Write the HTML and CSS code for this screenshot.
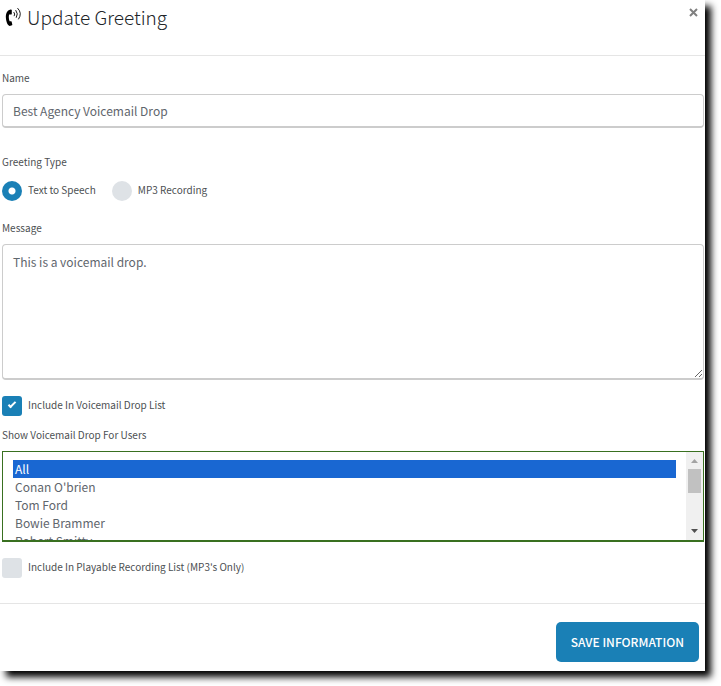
FILE: index.html
```html
<!DOCTYPE html>
<html lang="en">
<head>
<meta charset="utf-8">
<title>Update Greeting</title>
<link rel="stylesheet" href="styles.css">
</head>
<body>
<form class="modal">
  <header class="modal-header">
    <h1 class="title">
      <svg class="title-icon" viewBox="0 0 18 20" aria-hidden="true">
        <path d="M5.6 2.6 C1.8 3.2 0.6 7.2 0.9 11 C1.2 15 2.6 18.3 4.6 18.9 L7 18.3 Q7.4 18.1 7.3 17.6 L6.6 14.6 Q6.4 14.1 5.8 14.2 L4.6 14.3 C3.7 12 3.6 9.6 4.1 7.6 L6.3 7.4 Q6.8 7.3 6.8 6.8 L6.8 3.1 Q6.7 2.5 5.6 2.6 Z" fill="currentColor"/>
        <g fill="none" stroke="currentColor" stroke-linecap="round" stroke-width="0.9">
          <path d="M9 5.4 Q10.4 7 9.3 8.8"/>
          <path d="M10.9 3.4 Q13.6 6.8 11.4 10.4"/>
          <path d="M12.8 1.4 Q17.6 6.2 13.6 12"/>
        </g>
      </svg>
      Update Greeting
    </h1>
    <button class="close" type="button" aria-label="Close">
      <svg viewBox="0 0 9 9" aria-hidden="true"><path d="M1 1 L8 8 M8 1 L1 8" stroke="currentColor" stroke-width="2"/></svg>
    </button>
  </header>
  <div class="modal-body">
    <div class="field">
      <label class="label" for="name">Name</label>
      <input class="control" id="name" type="text" value="Best Agency Voicemail Drop">
    </div>
    <fieldset class="choices">
      <legend class="label">Greeting Type</legend>
      <div class="choice-row">
        <label class="choice"><input class="tick radio" type="radio" name="type" checked>Text to Speech</label>
        <label class="choice"><input class="tick radio" type="radio" name="type">MP3 Recording</label>
      </div>
    </fieldset>
    <div class="field">
      <label class="label" for="message">Message</label>
      <textarea class="control message" id="message">This is a voicemail drop.</textarea>
    </div>
    <label class="choice"><input class="tick checkbox" type="checkbox" checked>Include In Voicemail Drop List</label>
    <div class="field users-field">
      <label class="label" for="users">Show Voicemail Drop For Users</label>
      <div class="users-box">
        <select class="users" id="users" multiple>
          <option selected>All</option>
          <option>Conan O'brien</option>
          <option>Tom Ford</option>
          <option>Bowie Brammer</option>
          <option>Robert Smitty</option>
        </select>
        <div class="scrollbar" aria-hidden="true">
          <svg class="arrow arrow-up" viewBox="0 0 7 4"><path d="M0 4 L3.5 0 L7 4 Z" fill="currentColor"/></svg>
          <div class="thumb"></div>
          <svg class="arrow" viewBox="0 0 7 4"><path d="M0 0 L7 0 L3.5 4 Z" fill="currentColor"/></svg>
        </div>
      </div>
    </div>
    <label class="choice"><input class="tick checkbox" type="checkbox">Include In Playable Recording List (MP3's Only)</label>
  </div>
  <footer class="modal-footer">
    <button class="save" type="submit">SAVE INFORMATION</button>
  </footer>
</form>
</body>
</html>
```
FILE: styles.css
```css
* { box-sizing: border-box; }

body {
  margin: 0;
  padding: 0 16px 15px 0;
  background: #fff;
  color: #4c4f52;
  font-family: "Noto Sans CJK SC", "Noto Sans", sans-serif;
  font-size: 10px;
  line-height: 16px;
}

.modal {
  background: #fff;
  box-shadow: 6px 6px 7px #000;
}

.modal-header {
  display: flex;
  justify-content: space-between;
  align-items: flex-start;
  padding: 4px 7px 25px 5px;
  border-bottom: 1px solid #e5e5e5;
}

.title {
  display: flex;
  align-items: center;
  gap: 4px;
  margin: 0;
  color: #212529;
  font-size: 19px;
  font-weight: 300;
  line-height: 26px;
}

.title-icon { width: 18px; height: 20px; color: #000; }

.close {
  display: flex;
  padding: 4px 0;
  border: 0;
  background: none;
  color: #808080;
}

.close svg { width: 9px; height: 9px; }

.modal-body { padding: 14px 1px 25px 2px; }

.field { display: flex; flex-direction: column; }

.label { display: block; padding: 0; margin-bottom: 8px; }

.control {
  width: 100%;
  height: 34px;
  padding: 6px 10px;
  border: 1px solid #ccc;
  border-bottom-width: 2px;
  border-radius: 4px;
  background: #fff;
  color: #5f666d;
  font: inherit;
  font-size: 12px;
  line-height: 20px;
}

.message { height: 136px; padding-top: 7px; margin-bottom: 16px; resize: vertical; }

.choices { margin: 26px 0 19px; padding: 0; border: 0; }

.choices .label { margin-bottom: 11px; }

.choice-row { display: flex; gap: 16px; }

.choice { display: flex; align-items: flex-start; gap: 6px; line-height: 18px; }

.tick {
  appearance: none;
  flex: none;
  width: 20px;
  height: 20px;
  margin: 0;
  background: #dee2e6 center / 100% no-repeat;
}

.tick:checked { background-color: #1a80b6; }

.radio { border-radius: 50%; }

.radio:checked { background-image: radial-gradient(circle, #fff 3px, transparent 4px); }

.checkbox { position: relative; border-radius: 3px; }

.checkbox:checked::after {
  content: "";
  position: absolute;
  left: 6px;
  top: 6px;
  width: 6px;
  height: 2px;
  border: solid #fff;
  border-width: 0 0 2px 2px;
  transform: rotate(-45deg);
}

.users-field { margin: 11px 0 16px; }

.users-box {
  display: flex;
  height: 91px;
  border: 1px solid #397020;
  border-bottom-width: 2px;
}

.users {
  flex: 1;
  min-width: 0;
  height: 100%;
  padding: 8px 10px;
  border: 0;
  border-radius: 0;
  outline: 0;
  background: #fff;
  color: #5f666d;
  font: inherit;
  font-size: 12px;
}

.users option {
  display: block;
  height: 18px;
  min-height: 18px;
  padding: 0 2px;
  line-height: 16px;
}

.users option:checked {
  background: linear-gradient(#1967d2, #1967d2);
  -webkit-text-fill-color: #fff;
}

.scrollbar {
  display: flex;
  flex-direction: column;
  align-items: center;
  width: 17px;
  padding: 7px 2px;
  background: #f0f0f0;
}

.thumb {
  width: 100%;
  height: 24px;
  margin: 6px 0 auto;
  background: #c1c1c1;
}

.arrow { width: 7px; height: 4px; color: #505050; }

.arrow-up { color: #a3a3a3; }

.modal-footer {
  display: flex;
  justify-content: flex-end;
  padding: 18px 6px 9px;
  border-top: 1px solid #e5e5e5;
}

.save {
  height: 40px;
  padding: 0 15px;
  border: 0;
  border-radius: 5px;
  background: #1a80b6;
  color: #fff;
  font: inherit;
  font-size: 12px;
  font-weight: 500;
}
```
